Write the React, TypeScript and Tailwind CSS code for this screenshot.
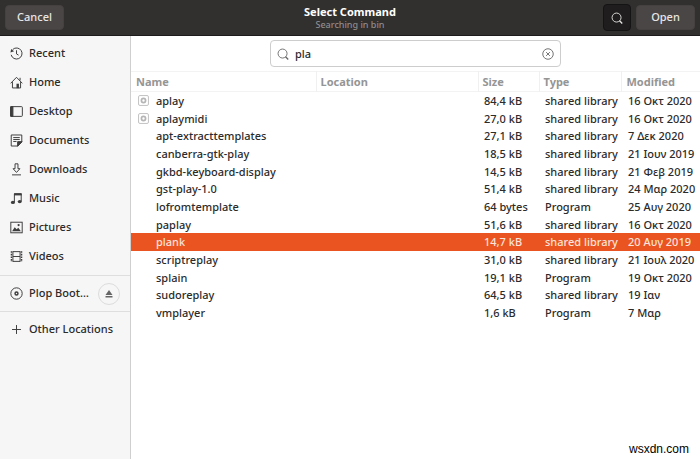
import React, { useState } from 'react';

type IconProps = { children: React.ReactNode; className?: string };

const Icon = ({ children, className = 'size-[13px] text-[#3d3d3d]' }: IconProps) => (
  <svg
    viewBox="0 0 16 16"
    className={`${className} shrink-0`}
    fill="none"
    stroke="currentColor"
    strokeWidth="1.2"
    aria-hidden="true"
  >
    {children}
  </svg>
);

const SearchIcon = ({ className }: { className?: string }) => (
  <Icon className={className}>
    <circle cx="7.4" cy="7.4" r="6" />
    <path d="M11.4 11.8 15 15.2" strokeWidth="1.8" />
  </Icon>
);

const places = [
  {
    name: 'Recent',
    icon: (
      <>
        <path d="M3.4 3A6.8 6.8 0 1 1 1.4 9.600" />
        <path d="M.6 6.8 1.4 2.4 5 5.2z" fill="currentColor" stroke="none" />
        <path d="M8 4v4.5l2.5 1.5" />
      </>
    ),
  },
  {
    name: 'Home',
    icon: (
      <>
        <path d="M.8 9 8 1.6 15.2 9M3 7.5v7.2h10V7.5M12.400 5.500V2.2" />
        <path d="M8 9.5h3V15H8z" fill="currentColor" stroke="none" />
      </>
    ),
  },
  {
    name: 'Desktop',
    icon: (
      <>
        <rect x=".8" y="2" width="14.4" height="12" rx="1" />
        <path d="M.8 2h2.800v12H.8z" fill="currentColor" />
      </>
    ),
  },
  {
    name: 'Documents',
    icon: (
      <>
        <path d="M1.5 1.2h13v8.6l-4.8 5H1.5z" />
        <path d="M14.8 9.4H9.4V15z" fill="currentColor" />
        <path d="M4 4.4h8M4 6.8h8M4 9.2h4" />
      </>
    ),
  },
  {
    name: 'Downloads',
    icon: <path d="M6.2 1h3.6v6h2.4L8 11.6 3.800 7h2.4zM2.5 14.6h11" />,
  },
  {
    name: 'Music',
    icon: (
      <>
        <path d="M5.4 12.4V2.2h8.4v9" />
        <path d="M5 1.6h9.4v2.6H5z" fill="currentColor" stroke="none" />
        <ellipse cx="3.6" cy="12.8" rx="2.5" ry="2" fill="currentColor" stroke="none" />
        <ellipse cx="12" cy="11.8" rx="2.5" ry="2" fill="currentColor" stroke="none" />
      </>
    ),
  },
  {
    name: 'Pictures',
    icon: (
      <>
        <rect x="1" y="1.5" width="14" height="13" />
        <path d="m2.6 12.6 3.2-5 2.4 2.6 2-1.8 3.2 4.2z" fill="currentColor" stroke="none" />
        <circle cx="10.6" cy="5" r="1.4" fill="currentColor" stroke="none" />
      </>
    ),
  },
  {
    name: 'Videos',
    icon: (
      <>
        <path d="M3.6 1.5v13M12.4 1.5v13M3.6 8h8.8M3.6 2h8.8M3.6 14h8.8" />
        <path d="M1.8 1.5v13M14.2 1.5v13" strokeWidth="1.8" strokeDasharray="2 1.2" />
      </>
    ),
  },
];

const files = [
  { name: 'aplay', size: '84,4 kB', type: 'shared library', modified: '16 Οκτ 2020', app: true },
  { name: 'aplaymidi', size: '27,0 kB', type: 'shared library', modified: '16 Οκτ 2020', app: true },
  { name: 'apt-extracttemplates', size: '27,1 kB', type: 'shared library', modified: '7 Δεκ 2020' },
  { name: 'canberra-gtk-play', size: '18,5 kB', type: 'shared library', modified: '21 Ιουν 2019' },
  { name: 'gkbd-keyboard-display', size: '14,5 kB', type: 'shared library', modified: '21 Φεβ 2019' },
  { name: 'gst-play-1.0', size: '51,4 kB', type: 'shared library', modified: '24 Μαρ 2020' },
  { name: 'lofromtemplate', size: '64 bytes', type: 'Program', modified: '25 Αυγ 2020' },
  { name: 'paplay', size: '51,6 kB', type: 'shared library', modified: '16 Οκτ 2020' },
  { name: 'plank', size: '14,7 kB', type: 'shared library', modified: '20 Αυγ 2019' },
  { name: 'scriptreplay', size: '31,0 kB', type: 'shared library', modified: '21 Ιουλ 2020' },
  { name: 'splain', size: '19,1 kB', type: 'Program', modified: '19 Οκτ 2020' },
  { name: 'sudoreplay', size: '64,5 kB', type: 'shared library', modified: '19 Ιαν' },
  { name: 'vmplayer', size: '1,6 kB', type: 'Program', modified: '7 Μαρ' },
];

const placeClass = 'flex h-[29px] w-full items-center gap-[6px] pl-[10px] text-left';

const App = () => {
  const [query, setQuery] = useState('pla');
  const [selected, setSelected] = useState('plank');

  return (
    <div className="flex min-h-screen flex-col bg-white font-['Noto_Sans',sans-serif] text-[11px] font-medium text-[#2b2b2b]">
      {/* Header bar */}
      <header className="grid h-9 grid-cols-[1fr_auto_1fr] items-center border-b border-[#1d1b1b] bg-[#322f2f] px-[5px] text-[#e8e6e5]">
        <button className="h-[25px] w-[59px] rounded-sm border border-[#454141] bg-[#4a4646]">Cancel</button>
        <div className="text-center">
          <h1 className="text-[11px] leading-[15px] font-bold text-white">Select Command</h1>
          <p className="text-[9px] leading-[12px] text-[#8f8c8b]">Searching in bin</p>
        </div>
        <div className="flex items-center justify-end gap-[5px]">
          <button
            aria-label="Search"
            className="flex h-[27px] w-7 items-center justify-center rounded-sm border border-[#151414] bg-[#1f1d1d]"
          >
            <SearchIcon className="size-3" />
          </button>
          <button className="h-[25px] w-[59px] rounded-sm border border-[#454141] bg-[#4a4646]">Open</button>
        </div>
      </header>

      <div className="flex flex-1">
        {/* Places */}
        <nav className="w-[131px] shrink-0 border-r border-[#cfcfcf] bg-[#f6f6f6]">
          <ul className="border-b border-[#dedede] pt-[3px] pb-1">
            {places.map((place) => (
              <li key={place.name}>
                <button className={placeClass}>
                  <Icon>{place.icon}</Icon>
                  {place.name}
                </button>
              </li>
            ))}
          </ul>
          <div className="flex h-9 items-center border-b border-[#dedede] pr-[10px]">
            <button className="flex min-w-0 flex-1 items-center gap-[6px] pl-[10px]">
              <Icon>
                <circle cx="8" cy="8" r="7" />
                <circle cx="8" cy="8" r="1.8" strokeWidth="1.8" />
              </Icon>
              <span>Plop Boot…</span>
            </button>
            <button
              aria-label="Eject"
              className="flex size-[22px] shrink-0 items-center justify-center rounded-full border border-[#dcdcdc] text-[#666]"
            >
              <svg viewBox="0 0 8 8" className="size-2" fill="currentColor" aria-hidden="true">
                <path d="M4 0 7.5 5h-7zM.5 6h7v1.6h-7z" />
              </svg>
            </button>
          </div>
          <div className="pt-[3px]">
            <button className={placeClass}>
              <Icon>
                <path d="M8 2.5v11M2.5 8h11" />
              </Icon>
              Other Locations
            </button>
          </div>
        </nav>

        <main className="flex min-w-0 flex-1 flex-col">
          <div className="flex justify-center px-4 pt-1 pb-1">
            <label className="flex h-[27px] w-[291px] items-center gap-[6px] rounded-sm border border-[#cdcdcd] px-[6px]">
              <span className="sr-only">Search</span>
              <SearchIcon className="size-3 text-[#666]" />
              <input
                type="text"
                value={query}
                onChange={(e) => setQuery(e.target.value)}
                className="h-5 min-w-0 flex-1 leading-5 outline-none"
              />
              <button aria-label="Clear" onClick={() => setQuery('')}>
                <Icon className="size-3 text-[#666]">
                  <circle cx="8" cy="8" r="7" />
                  <path d="m5.5 5.5 5 5M10.5 5.5l-5 5" />
                </Icon>
              </button>
            </label>
          </div>

          <table className="w-full table-fixed border-collapse text-left">
            <thead>
              <tr className="h-5 border-y border-[#f3f3f3] leading-[18px] text-[#959595]">
                <th className="py-0 pl-[5px] font-bold">Name</th>
                <th className="w-[162px] border-l border-[#f0f0f0] py-0 pl-1 font-bold">Location</th>
                <th className="w-[61px] border-l border-[#f0f0f0] py-0 pl-1 font-bold">Size</th>
                <th className="w-[82px] border-l border-[#f0f0f0] py-0 pl-1 font-bold">Type</th>
                <th className="w-[79px] border-l border-[#f0f0f0] py-0 pl-[5px] font-bold">Modified</th>
              </tr>
            </thead>
            <tbody>
              {files.map((file) => (
                <tr
                  key={file.name}
                  onClick={() => setSelected(file.name)}
                  className={`h-[18px] leading-[17px] whitespace-nowrap nth-[3n+2]:h-[17px] ${
                    file.name === selected ? 'bg-[#e95420] text-[#fbe3da]' : ''
                  }`}
                >
                  <td className="p-0">
                    <div className="flex items-center gap-[7px] pl-[7px]">
                      <span className="size-[11px] shrink-0">
                        {file.app && (
                          <Icon className="size-[11px] text-[#b5b5b5]">
                            <rect x=".8" y=".8" width="14.4" height="14.4" rx="2" />
                            <circle cx="8" cy="8" r="3" strokeWidth="2.5" />
                          </Icon>
                        )}
                      </span>
                      {file.name}
                    </div>
                  </td>
                  <td className="p-0" />
                  <td className="p-0 pl-[6px]">{file.size}</td>
                  <td className="p-0 pl-[6px]">{file.type}</td>
                  <td className="p-0 pl-[7px]">{file.modified}</td>
                </tr>
              ))}
            </tbody>
          </table>

          <p className="mt-auto pr-[11px] pb-[2px] text-right font-['Liberation_Sans',sans-serif] text-[12px] leading-4 font-normal text-black">
            wsxdn.com
          </p>
        </main>
      </div>
    </div>
  );
};

export default App;
